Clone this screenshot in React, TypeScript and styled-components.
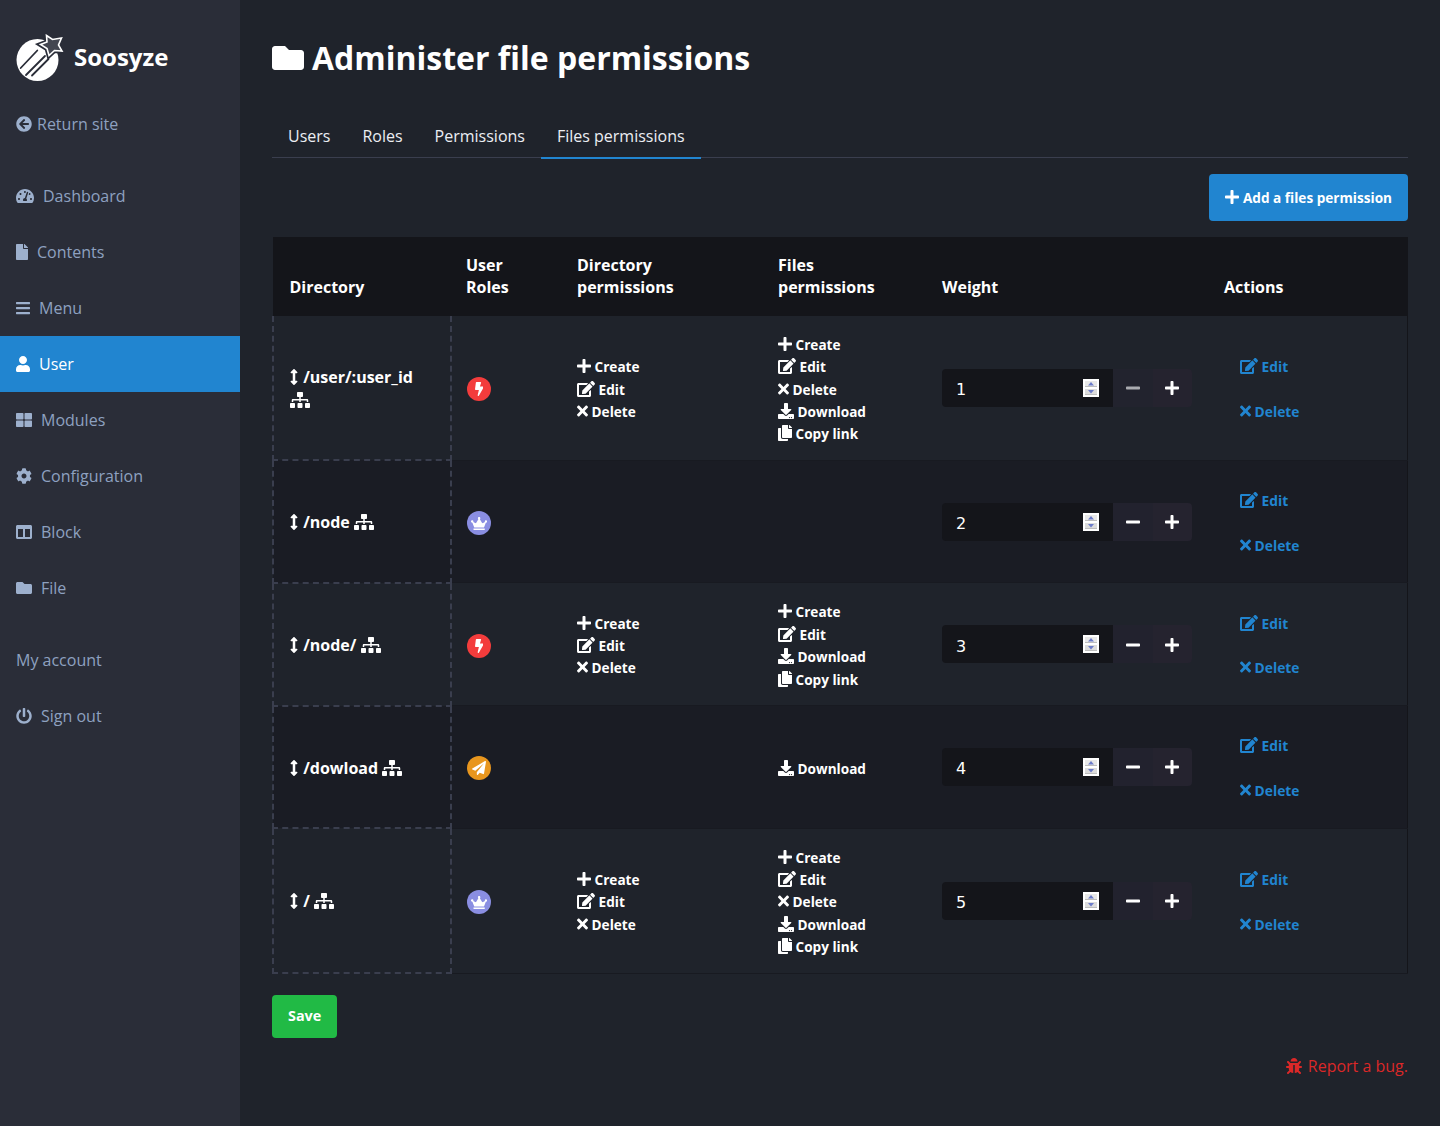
import React from "react";
import styled, { createGlobalStyle } from "styled-components";
import {
  FaArrowCircleLeft,
  FaArrowsAltV,
  FaBars,
  FaBolt,
  FaBug,
  FaCog,
  FaColumns,
  FaCopy,
  FaCrown,
  FaDownload,
  FaEdit,
  FaFile,
  FaFolder,
  FaMinus,
  FaPaperPlane,
  FaPlus,
  FaPowerOff,
  FaSitemap,
  FaTachometerAlt,
  FaThLarge,
  FaTimes,
  FaUser,
} from "react-icons/fa";

const GlobalStyle = createGlobalStyle`
  html, body {
    margin: 0;
    padding: 0;
    background: #1f232b;
  }
  body {
    font-family: "Open Sans", "Noto Sans", sans-serif;
    font-size: 16px;
    line-height: 22.4px;
    color: #fff;
  }
  svg {
    vertical-align: -0.125em;
  }
`;

// react-icons renders every icon 1em square, so give each glyph its real width
const PlusIcon = styled(FaPlus)`width: 0.875em;`;
const MinusIcon = styled(FaMinus)`width: 0.875em;`;
const EditIcon = styled(FaEdit)`width: 1.125em;`;
const TimesIcon = styled(FaTimes)`width: 0.6875em;`;
const CopyIcon = styled(FaCopy)`width: 0.875em;`;
const ArrowsIcon = styled(FaArrowsAltV)`
  width: 0.5em;
  margin-right: 1px;
`;
const SitemapIcon = styled(FaSitemap)`width: 1.25em;`;
const GaugeIcon = styled(FaTachometerAlt)`width: 1.125em;`;
const FileIcon = styled(FaFile)`width: 0.75em;`;
const BarsIcon = styled(FaBars)`width: 0.875em;`;
const UserIcon = styled(FaUser)`width: 0.875em;`;
const BoltIcon = styled(FaBolt)`width: 0.625em;`;
const CrownIcon = styled(FaCrown)`
  width: 1.25em;
  font-size: 13px;
`;

const Page = styled.div`
  display: flex;
  min-height: 1126px;
`;

const Sidebar = styled.aside`
  flex: 0 0 240px;
  background: #2a2d38;
`;

const Brand = styled.div`
  height: 96px;
  padding: 19px 16px 0;
  box-sizing: border-box;
  display: flex;
  align-items: center;
  gap: 10px;
  font-size: 24px;
  font-weight: 700;
  color: #fff;
`;

const LogoMark = styled.svg`
  flex: none;
  width: 48px;
  height: 48px;
`;

const NavGroup = styled.nav`
  margin-bottom: 16px;
`;

const NavItem = styled.a<{ $active?: boolean; $gap?: number }>`
  display: flex;
  align-items: center;
  gap: ${(props) => props.$gap ?? 9}px;
  height: 56px;
  padding: 0 16px;
  color: ${(props) => (props.$active ? "#fff" : "#8ea1c0")};
  background: ${(props) => (props.$active ? "#2185d0" : "transparent")};

  svg {
    color: ${(props) => (props.$active ? "#fff" : "#9db0cd")};
  }
`;

const Main = styled.main`
  flex: 1;
  min-width: 0;
  padding: 32px 32px 0;
`;

const Title = styled.h1`
  margin: 0 0 30px;
  height: 52px;
  font-size: 32px;
  line-height: 52px;
  font-weight: 700;
  color: #fff;

  svg {
    margin-right: 8px;
  }
`;

const Tabs = styled.ul`
  display: flex;
  margin: 0 0 16px;
  padding: 0;
  list-style: none;
  border-bottom: 1px solid #3a3e4e;
  height: 43px;
`;

const Tab = styled.li<{ $active?: boolean }>`
  height: 45px;
  padding: 11px 16px 0;
  box-sizing: border-box;
  color: #eceef3;
  border-bottom: 2px solid ${(props) => (props.$active ? "#2185d0" : "transparent")};
`;

const Toolbar = styled.div`
  display: flex;
  justify-content: flex-end;
  margin-bottom: 16px;
`;

const Button = styled.button<{ $color: string }>`
  padding: 10px 16px;
  border: none;
  border-radius: 4px;
  background: ${(props) => props.$color};
  color: #fff;
  font-family: inherit;
  font-size: 13.6px;
  line-height: 22.4px;
  font-weight: 700;

  svg {
    font-size: 16px;
  }
`;

const AddButton = styled(Button)`
  height: 47px;
  padding: 12px 16px 10px;
`;

const Table = styled.table`
  width: 100%;
  table-layout: fixed;
  border-collapse: collapse;
  border: 1px solid #14151a;
  margin-bottom: 21px;
`;

const HeadCell = styled.th`
  padding: 16px 16px 17px 15px;
  background: #14151a;
  text-align: left;
  vertical-align: bottom;
  font-size: 16px;
  font-weight: 700;

  &:first-child {
    padding-left: 16px;
  }
`;

const Row = styled.tr<{ $even: boolean }>`
  background: ${(props) => (props.$even ? "#1a1c24" : "#1f232b")};
  border-bottom: 1px solid #181a21;
`;

const Cell = styled.td`
  padding: 18px 16px 14px 15px;
  vertical-align: middle;
  font-size: 13.6px;
  font-weight: 700;
`;

const DirCell = styled(Cell)<{ $first: boolean }>`
  padding: 17px 18px 15px 16px;
  font-size: 16px;
  font-weight: 700;
  border: 2px dashed #3a3e4e;
  ${(props) => (props.$first ? "border-top: none;" : "")}
`;

const WeightCell = styled(Cell)`
  padding: 16px 16px 16px 15px;
`;

const Role = styled.span<{ $color: string }>`
  display: inline-flex;
  align-items: center;
  justify-content: center;
  width: 24px;
  height: 24px;
  border-radius: 50%;
  background: ${(props) => props.$color};
  color: #fff;
  font-size: 14px;
`;

const Perm = styled.div`
  color: #fff;

  svg {
    font-size: 16px;
  }
`;

const Stepper = styled.div`
  display: flex;
  width: 250px;
  height: 38px;
`;

const InputWrap = styled.div`
  position: relative;
  flex: 0 0 171px;
`;

const WeightInput = styled.input`
  display: block;
  width: 100%;
  box-sizing: border-box;
  height: 38px;
  padding: 8px 14px 4px;
  border: none;
  border-radius: 4px 0 0 4px;
  background: #14151a;
  color: #fff;
  font-family: "DejaVu Sans", sans-serif;
  font-size: 16px;
  outline: none;

  &::-webkit-inner-spin-button {
    -webkit-appearance: none;
  }
`;

const SpinBox = styled.svg`
  position: absolute;
  top: 10px;
  right: 14px;
  width: 16px;
  height: 18px;
  vertical-align: top;
`;

const StepButton = styled.button<{ $last?: boolean; $off?: boolean }>`
  flex: 1;
  padding: 2px 0 0;
  border: none;
  border-radius: ${(props) => (props.$last ? "0 4px 4px 0" : "0")};
  background: ${(props) => (props.$off ? "#22232e" : props.$last ? "#25232f" : "#22222e")};
  color: ${(props) => (props.$off ? "#aaabb0" : "#fff")};
  font-size: 16px;
  line-height: 1;
`;

const ActionLink = styled.a`
  display: block;
  padding: 11.2px 16px;
  font-size: 13.8px;
  color: #2185d0;

  svg {
    font-size: 16px;
  }
`;

const SaveButton = styled(Button)`
  display: block;
  height: 43px;
  font-size: 14.4px;
`;

const Footer = styled.footer`
  margin-top: 17px;
  text-align: right;
  color: #db2828;

  svg {
    margin-right: 2px;
  }
`;

function Logo() {
  const star = "M30.5 1.5 36.5 5.5 45.5 4 42.5 11 46 17 38.5 16.5 33 21.5 31 14.5 24.5 10.5 31 8Z";
  return (
    <LogoMark viewBox="0 0 48 48">
      <circle cx="21.5" cy="26" r="21" fill="#fff" />
      <path d="M4.7 34 21.3 16.5M10 41 29 22M16 41.5 32.5 25" stroke="#2a2d38" strokeWidth="1.8" strokeLinecap="round" fill="none" />
      <path d={star} fill="#2a2d38" stroke="#2a2d38" strokeWidth="5" />
      <path d={star} fill="#fff" fillOpacity="0.12" stroke="#fff" strokeWidth="1.6" />
    </LogoMark>
  );
}

function Spinner() {
  return (
    <SpinBox viewBox="0 0 16 18">
      <rect width="16" height="18" fill="#fff" />
      <rect x="2" y="2" width="12" height="6" fill="#e8e8e8" />
      <rect x="2" y="7" width="12" height="1" fill="#bdbdbd" />
      <rect x="2" y="10" width="12" height="6" fill="#dcdcdc" />
      <rect x="2" y="15" width="12" height="1" fill="#bdbdbd" />
      <path d="M8 3 11 6.5H5Z" fill="#6b7bc9" />
      <path d="M8 14.5 11 11H5Z" fill="#6b7bc9" />
    </SpinBox>
  );
}

type PermName = "Create" | "Edit" | "Delete" | "Download" | "Copy link";

const permIcons: Record<PermName, React.ReactNode> = {
  Create: <PlusIcon />,
  Edit: <EditIcon />,
  Delete: <TimesIcon />,
  Download: <FaDownload />,
  "Copy link": <CopyIcon />,
};

function PermList({ items }: { items: PermName[] }) {
  return (
    <>
      {items.map((name) => (
        <Perm key={name}>
          {permIcons[name]} {name}
        </Perm>
      ))}
    </>
  );
}

const crud: PermName[] = ["Create", "Edit", "Delete"];

const rows = [
  {
    path: "/user/:user_id",
    role: { color: "#f33c3c", icon: <BoltIcon /> },
    dirs: crud,
    files: ["Create", "Edit", "Delete", "Download", "Copy link"] as PermName[],
    weight: 1,
  },
  { path: "/node", role: { color: "#8a8ee2", icon: <CrownIcon /> }, dirs: [], files: [], weight: 2 },
  {
    path: "/node/",
    role: { color: "#f33c3c", icon: <BoltIcon /> },
    dirs: crud,
    files: ["Create", "Edit", "Download", "Copy link"] as PermName[],
    weight: 3,
  },
  {
    path: "/dowload",
    role: { color: "#e8961e", icon: <FaPaperPlane /> },
    dirs: [],
    files: ["Download"] as PermName[],
    weight: 4,
  },
  {
    path: "/",
    role: { color: "#8a8ee2", icon: <CrownIcon /> },
    dirs: crud,
    files: ["Create", "Edit", "Delete", "Download", "Copy link"] as PermName[],
    weight: 5,
  },
];

const mainNav = [
  { label: "Dashboard", icon: <GaugeIcon /> },
  { label: "Contents", icon: <FileIcon /> },
  { label: "Menu", icon: <BarsIcon /> },
  { label: "User", icon: <UserIcon />, active: true },
  { label: "Modules", icon: <FaThLarge /> },
  { label: "Configuration", icon: <FaCog /> },
  { label: "Block", icon: <FaColumns /> },
  { label: "File", icon: <FaFolder /> },
];

export default function App() {
  return (
    <Page>
      <GlobalStyle />
      <Sidebar>
        <Brand>
          <Logo />
          Soosyze
        </Brand>
        <NavGroup>
          <NavItem $gap={5}>
            <FaArrowCircleLeft />
            Return site
          </NavItem>
        </NavGroup>
        <NavGroup>
          {mainNav.map((item) => (
            <NavItem key={item.label} $active={item.active}>
              {item.icon}
              {item.label}
            </NavItem>
          ))}
        </NavGroup>
        <NavGroup>
          <NavItem>My account</NavItem>
          <NavItem>
            <FaPowerOff />
            Sign out
          </NavItem>
        </NavGroup>
      </Sidebar>

      <Main>
        <Title>
          <FaFolder />
          Administer file permissions
        </Title>

        <Tabs>
          <Tab>Users</Tab>
          <Tab>Roles</Tab>
          <Tab>Permissions</Tab>
          <Tab $active>Files permissions</Tab>
        </Tabs>

        <Toolbar>
          <AddButton $color="#2185d0">
            <PlusIcon /> Add a files permission
          </AddButton>
        </Toolbar>

        <Table>
          <colgroup>
            <col style={{ width: 178 }} />
            <col style={{ width: 111 }} />
            <col style={{ width: 201 }} />
            <col style={{ width: 164 }} />
            <col style={{ width: 282 }} />
            <col />
          </colgroup>
          <thead>
            <tr>
              <HeadCell>Directory</HeadCell>
              <HeadCell>User Roles</HeadCell>
              <HeadCell>Directory permissions</HeadCell>
              <HeadCell>Files permissions</HeadCell>
              <HeadCell>Weight</HeadCell>
              <HeadCell>Actions</HeadCell>
            </tr>
          </thead>
          <tbody>
            {rows.map((row, index) => (
              <Row key={row.weight} $even={index % 2 === 1}>
                <DirCell $first={index === 0}>
                  <ArrowsIcon /> {row.path} <SitemapIcon />
                </DirCell>
                <Cell>
                  <Role $color={row.role.color}>{row.role.icon}</Role>
                </Cell>
                <Cell>
                  <PermList items={row.dirs} />
                </Cell>
                <Cell>
                  <PermList items={row.files} />
                </Cell>
                <WeightCell>
                  <Stepper>
                    <InputWrap>
                      <WeightInput type="number" defaultValue={row.weight} />
                      <Spinner />
                    </InputWrap>
                    <StepButton $off={row.weight === 1}>
                      <MinusIcon />
                    </StepButton>
                    <StepButton $last>
                      <PlusIcon />
                    </StepButton>
                  </Stepper>
                </WeightCell>
                <Cell>
                  <ActionLink>
                    <EditIcon /> Edit
                  </ActionLink>
                  <ActionLink>
                    <TimesIcon /> Delete
                  </ActionLink>
                </Cell>
              </Row>
            ))}
          </tbody>
        </Table>

        <SaveButton $color="#21ba45">Save</SaveButton>

        <Footer>
          <FaBug /> Report a bug.
        </Footer>
      </Main>
    </Page>
  );
}
